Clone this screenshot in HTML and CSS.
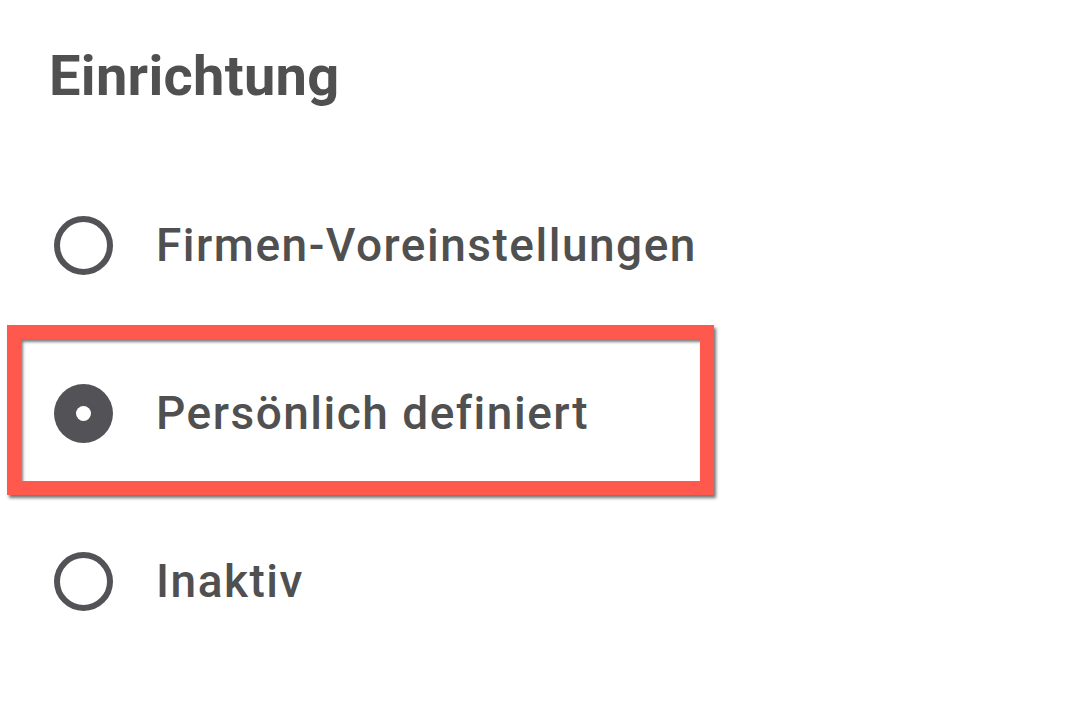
FILE: index.html
```html
<!DOCTYPE html>
<html lang="de">
<head>
<meta charset="utf-8">
<title>Einrichtung</title>
<link rel="stylesheet" href="styles.css">
</head>
<body>
<main class="page">
  <h1 class="title">Einrichtung</h1>
  <ul class="options">
    <li class="option">
      <span class="radio"></span>
      <span class="label">Firmen-Voreinstellungen</span>
    </li>
    <li class="option option--selected">
      <span class="radio radio--checked"></span>
      <span class="label">Persönlich definiert</span>
    </li>
    <li class="option">
      <span class="radio"></span>
      <span class="label">Inaktiv</span>
    </li>
  </ul>
</main>
</body>
</html>
```

FILE: styles.css
```css
html, body {
  margin: 0;
  padding: 0;
  background: #ffffff;
}

body {
  font-family: Roboto, "Liberation Sans", sans-serif;
  color: #505050;
}

.page {
  width: 1083px;
  height: 701px;
  overflow: hidden;
}

.title {
  margin: 0;
  padding: 41px 0 0 49px;
  font-size: 56px;
  font-weight: 700;
  line-height: 70px;
  color: #505050;
  letter-spacing: 0.3px;
}

.options {
  list-style: none;
  margin: 50px 0 0 0;
  padding: 0 0 0 54px;
}

.option {
  position: relative;
  display: flex;
  align-items: center;
  gap: 43px;
  height: 168px;
}

.option--selected::before {
  content: "";
  position: absolute;
  left: -47px;
  top: -4px;
  width: 679px;
  height: 142px;
  border: 14px solid #ff594d;
  box-shadow: 2px 3px 3px rgba(0, 0, 0, 0.55), inset 2px 3px 3px rgba(0, 0, 0, 0.5);
  pointer-events: none;
}

.radio {
  flex: none;
  box-sizing: border-box;
  width: 59px;
  height: 59px;
  border: 6.5px solid #535256;
  border-radius: 50%;
}

.radio--checked {
  background: #535256;
  border: none;
  display: flex;
  align-items: center;
  justify-content: center;
}

.radio--checked::after {
  content: "";
  width: 15px;
  height: 15px;
  border-radius: 50%;
  background: #ffffff;
}

.label {
  font-size: 46px;
  font-weight: 500;
  color: #505050;
  letter-spacing: 1.5px;
  white-space: nowrap;
}
```
